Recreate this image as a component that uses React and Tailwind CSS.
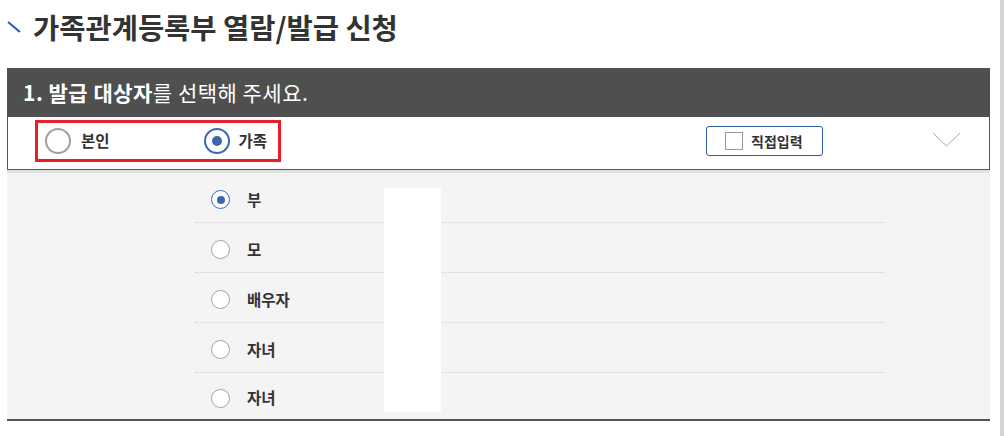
import { useState } from "react";

const FONT = { fontFamily: '"Noto Sans CJK KR", "Noto Sans", sans-serif' };

const family = ["부", "모", "배우자", "자녀", "자녀"];

function BigRadio({ checked }) {
  return (
    <span className={`flex h-[26px] w-[26px] items-center justify-center rounded-full border-2 bg-white ${checked ? "border-[#3a67b1]" : "border-[#a0a0a0]"}`}>
      {checked && <span className="h-[10px] w-[10px] rounded-full bg-[#3a67b1]" />}
    </span>
  );
}

function SmallRadio({ checked }) {
  return (
    <span className={`flex h-[19px] w-[19px] items-center justify-center rounded-full border-[1.5px] bg-white ${checked ? "border-[#3a6fc4]" : "border-[#a3a3a3]"}`}>
      {checked && <span className="h-[8px] w-[8px] rounded-full bg-[#3a67b1]" />}
    </span>
  );
}

export default function App() {
  const [target, setTarget] = useState("family");
  const [member, setMember] = useState(0);

  return (
    <div className="flex h-[436px] w-[1004px] overflow-hidden bg-white text-[#333]" style={FONT}>
      <div className="relative w-[1000px] pl-[7px] pr-[10px]">
        {/* 제목 */}
        <div className="flex h-[68px] items-start pt-[7px]">
          <svg width="26" height="30" viewBox="0 0 26 30" className="mt-[5px]">
            <line x1="1" y1="10" x2="13" y2="20" stroke="#2b5ea8" strokeWidth="2.2" />
          </svg>
          <h1 className="text-[28.5px] font-bold leading-[40px] text-[#333]">가족관계등록부 열람/발급 신청</h1>
        </div>

        {/* 1. 발급 대상자 */}
        <div className="flex h-[49px] items-center bg-[#4f4f4f] pl-[16px] text-[21px] tracking-[0.5px] text-white">
          <span className="font-bold">1. 발급 대상자</span>
          <span>를 선택해 주세요.</span>
        </div>

        <div className="flex h-[53px] items-start border-x border-b border-[#555] bg-white">
          <div className="ml-[27px] mt-[3px] flex h-[42px] w-[246px] items-center border-[3px] border-[#e5202a] pl-[7px]">
            <button onClick={() => setTarget("self")} className="flex items-center gap-[10px]">
              <BigRadio checked={target === "self"} />
              <span className="text-[15.5px] font-bold text-[#333]">본인</span>
            </button>
            <button onClick={() => setTarget("family")} className="ml-[94px] flex items-center gap-[9px]">
              <BigRadio checked={target === "family"} />
              <span className="text-[15.5px] font-bold text-[#333]">가족</span>
            </button>
          </div>

          <button className="ml-[425px] mt-[9px] flex h-[30px] w-[117px] items-center rounded-[3px] border border-[#2f5fa7] bg-white pl-[18px]">
            <span className="h-[18px] w-[18px] border border-[#999] bg-white" />
            <span className="ml-[8px] text-[14px] font-bold text-[#333]">직접입력</span>
          </button>

          <svg width="29" height="16" viewBox="0 0 29 16" className="ml-[109px] mt-[15px]">
            <polyline points="1,1 14.5,14 28,1" fill="none" stroke="#a8a8a8" strokeWidth="1" />
          </svg>
        </div>

        {/* 가족 목록 */}
        <div className="h-[251px] border-b-2 border-[#555] bg-[#f4f4f4] shadow-[inset_0_3px_0_#e2e2e2]">
          <ul className="ml-[188px] w-[690px] pt-[3px]">
            {family.map((name, i) => (
              <li key={i} className={`flex items-center pt-[4px] ${i < family.length - 1 ? "h-[50px] border-b border-dotted border-[#cfcfcf]" : "h-[46px]"}`}>
                <button onClick={() => setMember(i)} className="ml-[16px] flex items-center gap-[17px]">
                  <SmallRadio checked={member === i} />
                  <span className="text-[15.5px] font-bold text-[#333]">{name}</span>
                </button>
              </li>
            ))}
          </ul>
        </div>

        <div className="absolute left-[384px] top-[188px] h-[224px] w-[57px] bg-white" />
      </div>
      <div className="h-full w-[4px] bg-[#d4d4d4]" />
    </div>
  );
}
